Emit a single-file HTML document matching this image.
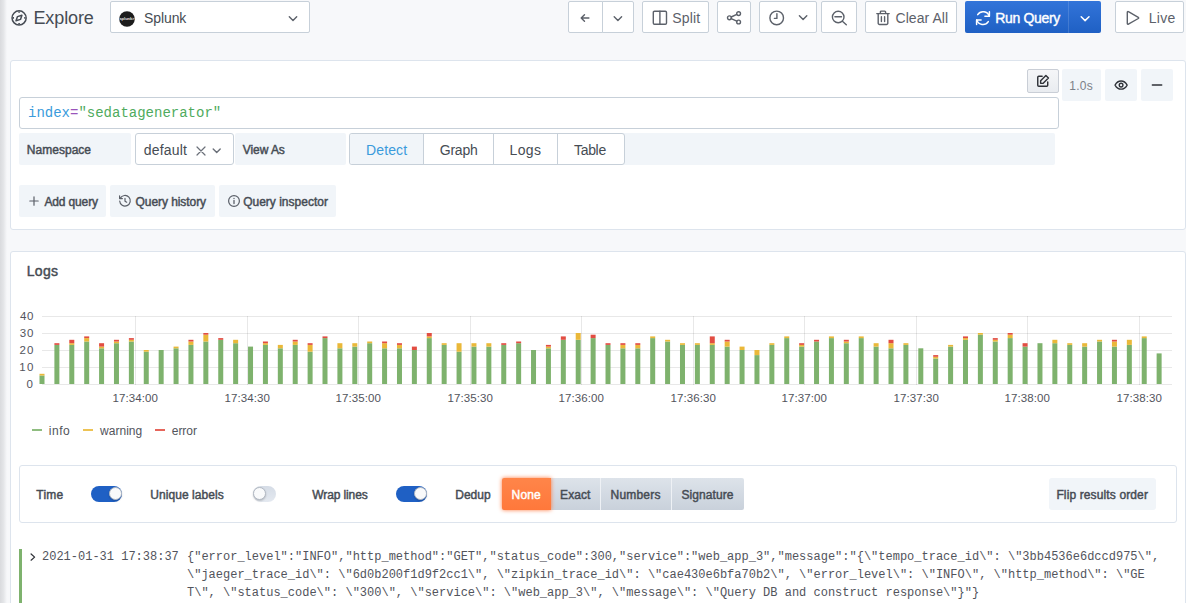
<!DOCTYPE html>
<html lang="en">
<head>
<meta charset="utf-8">
<title>Explore - Grafana</title>
<style>
html,body{margin:0;padding:0;}
body{width:1186px;height:603px;overflow:hidden;background:#f7f8fa;position:relative;font-family:"Liberation Sans",sans-serif;}
.abs{position:absolute;display:block;}
.tx{position:absolute;white-space:pre;display:block;}
.box{position:absolute;box-sizing:border-box;}
.tb{background:#fff;border:1px solid #c7d0d9;border-radius:2px;}
.sec{background:#f1f5f9;border-radius:2px;}
.panel{background:#fff;border:1px solid #dde4ed;border-radius:3px;}
svg{overflow:visible}
.ic{fill:none;stroke:#5c616a;stroke-width:1.4;stroke-linecap:round;stroke-linejoin:round}
</style>
</head>
<body>
<!-- left sidebar shadow -->
<div class="box" style="left:0;top:0;width:7px;height:603px;background:linear-gradient(90deg,rgba(60,64,72,.16),rgba(60,64,72,.10) 50%,rgba(60,64,72,0))"></div>

<!-- ===== top toolbar ===== -->
<svg class="abs" style="left:11px;top:10px" width="16" height="16" viewBox="0 0 16 16">
  <circle cx="8.1" cy="7.9" r="7.05" fill="none" stroke="#464c54" stroke-width="1.5"/>
  <path d="M10.9 5.2 L9.5 9.400 L5.0 10.8 L6.5 6.600 Z" fill="none" stroke="#464c54" stroke-width="1.500" stroke-linejoin="round"/>
  <path d="M8.1 1.5v1.200M8.1 13.100v1.200M1.8 7.900h1.200M13.200 7.900h1.200" stroke="#464c54" stroke-width="1.600"/>
</svg>

<div class="box tb" style="left:110px;top:1px;width:200px;height:32px;"></div>
<svg class="abs" style="left:119px;top:11px" width="16" height="16" viewBox="0 0 16 16">
  <circle cx="8" cy="8" r="7.800" fill="#1c1c1c"/>
  <text x="8" y="9.4" font-family="Liberation Sans, sans-serif" font-size="4" font-weight="700" fill="#e8e8e8" text-anchor="middle">splunk&gt;</text>
</svg>
<svg class="abs" style="left:288px;top:15px" width="10" height="8" viewBox="0 0 10 8"><path class="ic" d="M1.3 1.8 L5 5.5 L8.7 1.800"/></svg>

<!-- back / history -->
<div class="box tb" style="left:568px;top:1px;width:35px;height:32px;border-radius:2px 0 0 2px"></div>
<div class="box tb" style="left:602px;top:1px;width:32px;height:32px;border-radius:0 2px 2px 0"></div>
<svg class="abs" style="left:580px;top:13px" width="10" height="10" viewBox="0 0 10 10"><path class="ic" d="M8.900 5H1.300M4.500 1.700 L1.200 5 L4.500 8.300"/></svg>
<svg class="abs" style="left:613px;top:15px" width="10" height="8" viewBox="0 0 10 8"><path class="ic" d="M1.200 1.700 L4.900 5.400 L8.600 1.700"/></svg>

<!-- split -->
<div class="box tb" style="left:642px;top:1px;width:67px;height:32px;"></div>
<svg class="abs" style="left:652px;top:10px" width="16" height="16" viewBox="0 0 16 16"><rect class="ic" x="1.300" y="1.200" width="13.200" height="13.100" rx="1.200"/><path class="ic" d="M7.900 1.200v13.100"/></svg>

<!-- share -->
<div class="box tb" style="left:717px;top:1px;width:34px;height:32px;"></div>
<svg class="abs" style="left:726px;top:10px" width="16" height="16" viewBox="0 0 16 16"><circle class="ic" cx="3.400" cy="7.800" r="1.900"/><circle class="ic" cx="12.600" cy="3.600" r="1.900"/><circle class="ic" cx="12.600" cy="12" r="1.900"/><path class="ic" d="M5.200 7 L10.800 4.400M5.200 8.600 L10.800 11.200"/></svg>

<!-- time picker -->
<div class="box tb" style="left:759px;top:1px;width:58px;height:32px;"></div>
<svg class="abs" style="left:769px;top:10px" width="16" height="16" viewBox="0 0 16 16"><circle class="ic" cx="7.700" cy="7.900" r="6.800"/><path class="ic" d="M7.900 3.600V8.400H5.400"/></svg>
<svg class="abs" style="left:798px;top:14px" width="10" height="8" viewBox="0 0 10 8"><path class="ic" d="M1.400 1.800 L5.100 5.500 L8.800 1.800"/></svg>

<!-- zoom out -->
<div class="box tb" style="left:821px;top:1px;width:36px;height:32px;"></div>
<svg class="abs" style="left:831px;top:10px" width="17" height="17" viewBox="0 0 17 17"><circle class="ic" cx="7.200" cy="7" r="5.800"/><path class="ic" d="M3.900 6.700h6.600M11.400 11.200 L15.300 14.700"/></svg>

<!-- clear all -->
<div class="box tb" style="left:865px;top:1px;width:92px;height:32px;"></div>
<svg class="abs" style="left:876px;top:10px" width="14" height="16" viewBox="0 0 14 16"><path class="ic" d="M0.800 3.600h12.400M4.400 3.400V2a.9.900 0 0 1 .9-.9h3.400a.9.900 0 0 1 .9.900v1.400M2.200 3.800v9.400a1.300 1.300 0 0 0 1.300 1.300h7a1.300 1.300 0 0 0 1.300-1.300V3.800M5.400 6.800v4.800M8.600 6.800v4.800"/></svg>

<!-- run query -->
<div class="box" style="left:965px;top:1px;width:136px;height:32px;border-radius:2px;background:linear-gradient(180deg,#3274d9,#1f60c4)"></div>
<div class="box" style="left:1068px;top:1px;width:1px;height:32px;background:rgba(255,255,255,.14)"></div>
<svg class="abs" style="left:975px;top:10px" width="16" height="16" viewBox="0 0 16 16"><g fill="none" stroke="#fff" stroke-width="1.500" stroke-linecap="round" stroke-linejoin="round"><path d="M14.300 6.300A6.500 6.500 0 0 0 2.700 4.600"/><path d="M1.700 9.900a6.500 6.500 0 0 0 11.600 1.700"/><path d="M14.400 1.800v4.500H9.900"/><path d="M1.600 14.400V9.900H6.100"/></g></svg>
<svg class="abs" style="left:1080px;top:15px" width="10" height="8" viewBox="0 0 10 8"><path d="M1.200 1.800 L5.100 5.600 L9 1.800" fill="none" stroke="#fff" stroke-width="1.500" stroke-linecap="round" stroke-linejoin="round"/></svg>

<!-- live -->
<div class="box tb" style="left:1115px;top:1px;width:69px;height:32px;"></div>
<svg class="abs" style="left:1126px;top:10px" width="14" height="16" viewBox="0 0 14 16"><path class="ic" d="M1.300 2.300v11.200a.7.700 0 0 0 1.100.6l9.900-5.600a.7.700 0 0 0 0-1.200L2.400 1.700a.7.700 0 0 0-1.100.6z"/></svg>

<!-- ===== query panel ===== -->
<div class="box panel" style="left:10px;top:60px;width:1176px;height:170px;"></div>
<div class="box" style="left:19px;top:97px;width:1040px;height:32px;background:#fff;border:1px solid #c7d0d9;border-radius:3px"></div>

<!-- right tools -->
<div class="box" style="left:1027px;top:69px;width:32px;height:24px;background:linear-gradient(180deg,#f5f6f8,#e9ecf0);border:1px solid #c9ced6;border-radius:2px"></div>
<svg class="abs" style="left:1036.300px;top:74.400px" width="14" height="14" viewBox="0 0 16 16"><path class="ic" style="stroke:#2f3238;stroke-width:1.650" d="M7 2.6H3.2A1.2 1.2 0 0 0 2 3.8v9a1.2 1.2 0 0 0 1.200 1.2h9a1.2 1.2 0 0 0 1.2-1.2V9M11.300 1.800l2.900 2.900-6 6H5.300V7.800z"/></svg>
<div class="box sec" style="left:1062px;top:69px;width:39px;height:32px;"></div>
<div class="box sec" style="left:1105px;top:69px;width:32px;height:32px;"></div>
<div class="box sec" style="left:1141px;top:69px;width:32px;height:32px;"></div>
<svg class="abs" style="left:1114px;top:77.900px" width="14.200" height="14.200" viewBox="0 0 16 16"><path class="ic" style="stroke:#2f3238;stroke-width:1.550" d="M1.2 8S3.700 3.400 8 3.400 14.800 8 14.800 8 12.300 12.600 8 12.600 1.200 8 1.200 8z"/><circle class="ic" style="stroke:#2f3238;stroke-width:1.550" cx="8" cy="8" r="2.100"/></svg>
<svg class="abs" style="left:1149px;top:77px" width="16" height="16" viewBox="0 0 16 16"><path d="M3.400 8h9.300" stroke="#2f3238" stroke-width="1.500" stroke-linecap="round"/></svg>

<!-- row 2 -->
<div class="box sec" style="left:19px;top:133px;width:112px;height:32px;"></div>
<div class="box" style="left:135px;top:133px;width:99px;height:32px;background:#fff;border:1px solid #c7d0d9;border-radius:3px"></div>
<svg class="abs" style="left:196px;top:146px" width="10" height="10" viewBox="0 0 10 10"><path class="ic" style="stroke-width:1.200;stroke:#6b7079" d="M1 1 L9 9M9 1 L1 9"/></svg>
<svg class="abs" style="left:212px;top:147px" width="10" height="8" viewBox="0 0 10 8"><path class="ic" style="stroke:#6b7079" d="M1.200 1.900 L4.700 5.400 L8.200 1.900"/></svg>
<div class="box sec" style="left:235px;top:133px;width:111px;height:32px;"></div>
<div class="box sec" style="left:349px;top:133px;width:706px;height:32px;"></div>
<div class="box" style="left:349px;top:133px;width:276px;height:32px;background:#fff;border:1px solid #c7d0d9;border-radius:3px"></div>
<div class="box" style="left:350px;top:134px;width:73px;height:30px;background:#f1f5f9;border-radius:2px 0 0 2px"></div>
<div class="box" style="left:423px;top:134px;width:1px;height:30px;background:#c7d0d9"></div>
<div class="box" style="left:493px;top:134px;width:1px;height:30px;background:#c7d0d9"></div>
<div class="box" style="left:557px;top:134px;width:1px;height:30px;background:#c7d0d9"></div>

<!-- row 3 buttons -->
<div class="box sec" style="left:19px;top:185px;width:87px;height:32px;"></div>
<div class="box sec" style="left:110px;top:185px;width:105px;height:32px;"></div>
<div class="box sec" style="left:219px;top:185px;width:117px;height:32px;"></div>
<svg class="abs" style="left:29px;top:196px" width="10" height="10" viewBox="0 0 10 10"><path class="ic" style="stroke:#5a5f68;stroke-width:1.2" d="M5 .8v8.400M.8 5h8.400"/></svg>
<svg class="abs" style="left:118px;top:194px" width="14" height="14" viewBox="0 0 14 14"><path class="ic" style="stroke:#5a5f68;stroke-width:1.2" d="M2.300 4.300A5.300 5.300 0 1 1 1.700 7M1.600 1.800v2.800h2.800M7 4.400V7.200l1.700 1"/></svg>
<svg class="abs" style="left:227px;top:194px" width="14" height="14" viewBox="0 0 14 14"><circle class="ic" style="stroke:#5a5f68;stroke-width:1.2" cx="7" cy="7" r="5.400"/><path class="ic" style="stroke:#5a5f68;stroke-width:1.300" d="M7 6.400v3.200M7 4.300v.1"/></svg>

<!-- ===== logs panel ===== -->
<div class="box panel" style="left:10px;top:251px;width:1176px;height:370px;"></div>
<svg class="abs" style="left:0;top:300px" width="1186" height="110" viewBox="0 300 1186 110">
<rect x="42" y="384" width="1130" height="1" fill="rgba(0,0,0,0.09)"/>
<rect x="42" y="367" width="1130" height="1" fill="rgba(0,0,0,0.09)"/>
<rect x="42" y="350" width="1130" height="1" fill="rgba(0,0,0,0.09)"/>
<rect x="42" y="333" width="1130" height="1" fill="rgba(0,0,0,0.09)"/>
<rect x="42" y="316" width="1130" height="1" fill="rgba(0,0,0,0.09)"/>
<rect x="135" y="316" width="1" height="69" fill="rgba(0,0,0,0.09)"/>
<rect x="247" y="316" width="1" height="69" fill="rgba(0,0,0,0.09)"/>
<rect x="358" y="316" width="1" height="69" fill="rgba(0,0,0,0.09)"/>
<rect x="470" y="316" width="1" height="69" fill="rgba(0,0,0,0.09)"/>
<rect x="581" y="316" width="1" height="69" fill="rgba(0,0,0,0.09)"/>
<rect x="693" y="316" width="1" height="69" fill="rgba(0,0,0,0.09)"/>
<rect x="804" y="316" width="1" height="69" fill="rgba(0,0,0,0.09)"/>
<rect x="916" y="316" width="1" height="69" fill="rgba(0,0,0,0.09)"/>
<rect x="1027" y="316" width="1" height="69" fill="rgba(0,0,0,0.09)"/>
<rect x="1139" y="316" width="1" height="69" fill="rgba(0,0,0,0.09)"/>
<rect x="39.50" y="375.50" width="5.0" height="8.50" fill="#7eb26d"/>
<rect x="39.50" y="373.80" width="5.0" height="1.70" fill="#eab839"/>
<rect x="54.39" y="344.90" width="5.0" height="39.10" fill="#7eb26d"/>
<rect x="54.39" y="343.20" width="5.0" height="1.70" fill="#e24d42"/>
<rect x="69.29" y="344.90" width="5.0" height="39.10" fill="#7eb26d"/>
<rect x="69.29" y="343.20" width="5.0" height="1.70" fill="#eab839"/>
<rect x="69.29" y="339.80" width="5.0" height="3.40" fill="#e24d42"/>
<rect x="84.19" y="341.50" width="5.0" height="42.50" fill="#7eb26d"/>
<rect x="84.19" y="338.10" width="5.0" height="3.40" fill="#eab839"/>
<rect x="84.19" y="336.40" width="5.0" height="1.70" fill="#e24d42"/>
<rect x="99.08" y="348.30" width="5.0" height="35.70" fill="#7eb26d"/>
<rect x="99.08" y="346.60" width="5.0" height="1.70" fill="#eab839"/>
<rect x="99.08" y="343.20" width="5.0" height="3.40" fill="#e24d42"/>
<rect x="113.97" y="343.20" width="5.0" height="40.80" fill="#7eb26d"/>
<rect x="113.97" y="341.50" width="5.0" height="1.70" fill="#eab839"/>
<rect x="113.97" y="339.80" width="5.0" height="1.70" fill="#e24d42"/>
<rect x="128.87" y="341.50" width="5.0" height="42.50" fill="#7eb26d"/>
<rect x="128.87" y="339.80" width="5.0" height="1.70" fill="#eab839"/>
<rect x="128.87" y="338.10" width="5.0" height="1.70" fill="#e24d42"/>
<rect x="143.76" y="351.70" width="5.0" height="32.30" fill="#7eb26d"/>
<rect x="143.76" y="350.00" width="5.0" height="1.70" fill="#eab839"/>
<rect x="158.66" y="350.00" width="5.0" height="34.00" fill="#7eb26d"/>
<rect x="173.56" y="348.30" width="5.0" height="35.70" fill="#7eb26d"/>
<rect x="173.56" y="346.60" width="5.0" height="1.70" fill="#eab839"/>
<rect x="188.45" y="344.90" width="5.0" height="39.10" fill="#7eb26d"/>
<rect x="188.45" y="341.50" width="5.0" height="3.40" fill="#eab839"/>
<rect x="188.45" y="339.80" width="5.0" height="1.70" fill="#e24d42"/>
<rect x="203.34" y="341.50" width="5.0" height="42.50" fill="#7eb26d"/>
<rect x="203.34" y="334.70" width="5.0" height="6.80" fill="#eab839"/>
<rect x="203.34" y="333.00" width="5.0" height="1.70" fill="#e24d42"/>
<rect x="218.24" y="339.80" width="5.0" height="44.20" fill="#7eb26d"/>
<rect x="218.24" y="338.10" width="5.0" height="1.70" fill="#e24d42"/>
<rect x="233.13" y="343.20" width="5.0" height="40.80" fill="#7eb26d"/>
<rect x="233.13" y="339.80" width="5.0" height="3.40" fill="#eab839"/>
<rect x="248.03" y="346.60" width="5.0" height="37.40" fill="#7eb26d"/>
<rect x="262.92" y="344.90" width="5.0" height="39.10" fill="#7eb26d"/>
<rect x="262.92" y="343.20" width="5.0" height="1.70" fill="#eab839"/>
<rect x="262.92" y="341.50" width="5.0" height="1.70" fill="#e24d42"/>
<rect x="277.82" y="348.30" width="5.0" height="35.70" fill="#7eb26d"/>
<rect x="277.82" y="344.90" width="5.0" height="3.40" fill="#eab839"/>
<rect x="292.72" y="344.90" width="5.0" height="39.10" fill="#7eb26d"/>
<rect x="292.72" y="341.50" width="5.0" height="3.40" fill="#eab839"/>
<rect x="292.72" y="339.80" width="5.0" height="1.70" fill="#e24d42"/>
<rect x="307.61" y="351.70" width="5.0" height="32.30" fill="#7eb26d"/>
<rect x="307.61" y="344.90" width="5.0" height="6.80" fill="#eab839"/>
<rect x="307.61" y="343.20" width="5.0" height="1.70" fill="#e24d42"/>
<rect x="322.50" y="338.10" width="5.0" height="45.90" fill="#7eb26d"/>
<rect x="322.50" y="336.40" width="5.0" height="1.70" fill="#e24d42"/>
<rect x="337.40" y="348.30" width="5.0" height="35.70" fill="#7eb26d"/>
<rect x="337.40" y="343.20" width="5.0" height="5.10" fill="#eab839"/>
<rect x="352.30" y="346.60" width="5.0" height="37.40" fill="#7eb26d"/>
<rect x="352.30" y="343.20" width="5.0" height="3.40" fill="#eab839"/>
<rect x="367.19" y="343.20" width="5.0" height="40.80" fill="#7eb26d"/>
<rect x="367.19" y="341.50" width="5.0" height="1.70" fill="#eab839"/>
<rect x="382.08" y="348.30" width="5.0" height="35.70" fill="#7eb26d"/>
<rect x="382.08" y="343.20" width="5.0" height="5.10" fill="#eab839"/>
<rect x="382.08" y="341.50" width="5.0" height="1.70" fill="#e24d42"/>
<rect x="396.98" y="348.30" width="5.0" height="35.70" fill="#7eb26d"/>
<rect x="396.98" y="344.90" width="5.0" height="3.40" fill="#eab839"/>
<rect x="396.98" y="343.20" width="5.0" height="1.70" fill="#e24d42"/>
<rect x="411.88" y="350.00" width="5.0" height="34.00" fill="#7eb26d"/>
<rect x="411.88" y="346.60" width="5.0" height="3.40" fill="#e24d42"/>
<rect x="426.77" y="338.10" width="5.0" height="45.90" fill="#7eb26d"/>
<rect x="426.77" y="336.40" width="5.0" height="1.70" fill="#eab839"/>
<rect x="426.77" y="333.00" width="5.0" height="3.40" fill="#e24d42"/>
<rect x="441.66" y="344.90" width="5.0" height="39.10" fill="#7eb26d"/>
<rect x="441.66" y="343.20" width="5.0" height="1.70" fill="#eab839"/>
<rect x="456.56" y="351.70" width="5.0" height="32.30" fill="#7eb26d"/>
<rect x="456.56" y="343.20" width="5.0" height="8.50" fill="#eab839"/>
<rect x="471.45" y="346.60" width="5.0" height="37.40" fill="#7eb26d"/>
<rect x="471.45" y="343.20" width="5.0" height="3.40" fill="#eab839"/>
<rect x="486.35" y="346.60" width="5.0" height="37.40" fill="#7eb26d"/>
<rect x="486.35" y="343.20" width="5.0" height="3.40" fill="#eab839"/>
<rect x="501.25" y="344.90" width="5.0" height="39.10" fill="#7eb26d"/>
<rect x="501.25" y="343.20" width="5.0" height="1.70" fill="#e24d42"/>
<rect x="516.14" y="343.20" width="5.0" height="40.80" fill="#7eb26d"/>
<rect x="516.14" y="341.50" width="5.0" height="1.70" fill="#e24d42"/>
<rect x="531.03" y="350.00" width="5.0" height="34.00" fill="#7eb26d"/>
<rect x="545.93" y="348.30" width="5.0" height="35.70" fill="#7eb26d"/>
<rect x="545.93" y="346.60" width="5.0" height="1.70" fill="#eab839"/>
<rect x="545.93" y="344.90" width="5.0" height="1.70" fill="#e24d42"/>
<rect x="560.82" y="339.80" width="5.0" height="44.20" fill="#7eb26d"/>
<rect x="560.82" y="336.40" width="5.0" height="3.40" fill="#e24d42"/>
<rect x="575.72" y="339.80" width="5.0" height="44.20" fill="#7eb26d"/>
<rect x="575.72" y="333.00" width="5.0" height="6.80" fill="#eab839"/>
<rect x="590.62" y="338.10" width="5.0" height="45.90" fill="#7eb26d"/>
<rect x="590.62" y="334.70" width="5.0" height="3.40" fill="#e24d42"/>
<rect x="605.51" y="344.90" width="5.0" height="39.10" fill="#7eb26d"/>
<rect x="605.51" y="343.20" width="5.0" height="1.70" fill="#e24d42"/>
<rect x="620.40" y="348.30" width="5.0" height="35.70" fill="#7eb26d"/>
<rect x="620.40" y="344.90" width="5.0" height="3.40" fill="#eab839"/>
<rect x="620.40" y="343.20" width="5.0" height="1.70" fill="#e24d42"/>
<rect x="635.30" y="348.30" width="5.0" height="35.70" fill="#7eb26d"/>
<rect x="635.30" y="344.90" width="5.0" height="3.40" fill="#eab839"/>
<rect x="635.30" y="343.20" width="5.0" height="1.70" fill="#e24d42"/>
<rect x="650.19" y="338.10" width="5.0" height="45.90" fill="#7eb26d"/>
<rect x="650.19" y="336.40" width="5.0" height="1.70" fill="#eab839"/>
<rect x="665.09" y="341.50" width="5.0" height="42.50" fill="#7eb26d"/>
<rect x="665.09" y="339.80" width="5.0" height="1.70" fill="#eab839"/>
<rect x="679.99" y="344.90" width="5.0" height="39.10" fill="#7eb26d"/>
<rect x="679.99" y="343.20" width="5.0" height="1.70" fill="#eab839"/>
<rect x="694.88" y="344.90" width="5.0" height="39.10" fill="#7eb26d"/>
<rect x="694.88" y="343.20" width="5.0" height="1.70" fill="#eab839"/>
<rect x="709.77" y="344.90" width="5.0" height="39.10" fill="#7eb26d"/>
<rect x="709.77" y="343.20" width="5.0" height="1.70" fill="#eab839"/>
<rect x="709.77" y="336.40" width="5.0" height="6.80" fill="#e24d42"/>
<rect x="724.67" y="346.60" width="5.0" height="37.40" fill="#7eb26d"/>
<rect x="724.67" y="341.50" width="5.0" height="5.10" fill="#eab839"/>
<rect x="724.67" y="339.80" width="5.0" height="1.70" fill="#e24d42"/>
<rect x="739.56" y="350.00" width="5.0" height="34.00" fill="#7eb26d"/>
<rect x="739.56" y="346.60" width="5.0" height="3.40" fill="#eab839"/>
<rect x="754.46" y="355.10" width="5.0" height="28.90" fill="#7eb26d"/>
<rect x="754.46" y="350.00" width="5.0" height="5.10" fill="#eab839"/>
<rect x="769.36" y="344.90" width="5.0" height="39.10" fill="#7eb26d"/>
<rect x="769.36" y="343.20" width="5.0" height="1.70" fill="#eab839"/>
<rect x="784.25" y="338.10" width="5.0" height="45.90" fill="#7eb26d"/>
<rect x="784.25" y="336.40" width="5.0" height="1.70" fill="#eab839"/>
<rect x="799.14" y="346.60" width="5.0" height="37.40" fill="#7eb26d"/>
<rect x="799.14" y="344.90" width="5.0" height="1.70" fill="#eab839"/>
<rect x="799.14" y="343.20" width="5.0" height="1.70" fill="#e24d42"/>
<rect x="814.04" y="341.50" width="5.0" height="42.50" fill="#7eb26d"/>
<rect x="814.04" y="339.80" width="5.0" height="1.70" fill="#e24d42"/>
<rect x="828.93" y="338.10" width="5.0" height="45.90" fill="#7eb26d"/>
<rect x="828.93" y="336.40" width="5.0" height="1.70" fill="#eab839"/>
<rect x="843.83" y="343.20" width="5.0" height="40.80" fill="#7eb26d"/>
<rect x="843.83" y="341.50" width="5.0" height="1.70" fill="#eab839"/>
<rect x="843.83" y="339.80" width="5.0" height="1.70" fill="#e24d42"/>
<rect x="858.73" y="338.10" width="5.0" height="45.90" fill="#7eb26d"/>
<rect x="858.73" y="336.40" width="5.0" height="1.70" fill="#eab839"/>
<rect x="873.62" y="346.60" width="5.0" height="37.40" fill="#7eb26d"/>
<rect x="873.62" y="343.20" width="5.0" height="3.40" fill="#eab839"/>
<rect x="888.51" y="348.30" width="5.0" height="35.70" fill="#7eb26d"/>
<rect x="888.51" y="343.20" width="5.0" height="5.10" fill="#eab839"/>
<rect x="888.51" y="339.80" width="5.0" height="3.40" fill="#e24d42"/>
<rect x="903.41" y="344.90" width="5.0" height="39.10" fill="#7eb26d"/>
<rect x="903.41" y="343.20" width="5.0" height="1.70" fill="#eab839"/>
<rect x="918.30" y="348.30" width="5.0" height="35.70" fill="#7eb26d"/>
<rect x="933.20" y="358.50" width="5.0" height="25.50" fill="#7eb26d"/>
<rect x="933.20" y="356.80" width="5.0" height="1.70" fill="#eab839"/>
<rect x="933.20" y="355.10" width="5.0" height="1.70" fill="#e24d42"/>
<rect x="948.10" y="346.60" width="5.0" height="37.40" fill="#7eb26d"/>
<rect x="948.10" y="344.90" width="5.0" height="1.70" fill="#eab839"/>
<rect x="962.99" y="339.80" width="5.0" height="44.20" fill="#7eb26d"/>
<rect x="962.99" y="338.10" width="5.0" height="1.70" fill="#eab839"/>
<rect x="962.99" y="336.40" width="5.0" height="1.70" fill="#e24d42"/>
<rect x="977.88" y="334.70" width="5.0" height="49.30" fill="#7eb26d"/>
<rect x="977.88" y="333.00" width="5.0" height="1.70" fill="#eab839"/>
<rect x="992.78" y="341.50" width="5.0" height="42.50" fill="#7eb26d"/>
<rect x="992.78" y="339.80" width="5.0" height="1.70" fill="#eab839"/>
<rect x="992.78" y="338.10" width="5.0" height="1.70" fill="#e24d42"/>
<rect x="1007.67" y="338.10" width="5.0" height="45.90" fill="#7eb26d"/>
<rect x="1007.67" y="334.70" width="5.0" height="3.40" fill="#eab839"/>
<rect x="1007.67" y="333.00" width="5.0" height="1.70" fill="#e24d42"/>
<rect x="1022.57" y="346.60" width="5.0" height="37.40" fill="#7eb26d"/>
<rect x="1022.57" y="343.20" width="5.0" height="3.40" fill="#e24d42"/>
<rect x="1037.46" y="343.20" width="5.0" height="40.80" fill="#7eb26d"/>
<rect x="1052.36" y="343.20" width="5.0" height="40.80" fill="#7eb26d"/>
<rect x="1052.36" y="339.80" width="5.0" height="3.40" fill="#eab839"/>
<rect x="1067.25" y="344.90" width="5.0" height="39.10" fill="#7eb26d"/>
<rect x="1067.25" y="343.20" width="5.0" height="1.70" fill="#eab839"/>
<rect x="1082.15" y="346.60" width="5.0" height="37.40" fill="#7eb26d"/>
<rect x="1082.15" y="343.20" width="5.0" height="3.40" fill="#eab839"/>
<rect x="1097.05" y="341.50" width="5.0" height="42.50" fill="#7eb26d"/>
<rect x="1097.05" y="339.80" width="5.0" height="1.70" fill="#eab839"/>
<rect x="1111.94" y="346.60" width="5.0" height="37.40" fill="#7eb26d"/>
<rect x="1111.94" y="341.50" width="5.0" height="5.10" fill="#eab839"/>
<rect x="1111.94" y="339.80" width="5.0" height="1.70" fill="#e24d42"/>
<rect x="1126.84" y="344.90" width="5.0" height="39.10" fill="#7eb26d"/>
<rect x="1126.84" y="339.80" width="5.0" height="5.10" fill="#eab839"/>
<rect x="1141.73" y="338.10" width="5.0" height="45.90" fill="#7eb26d"/>
<rect x="1141.73" y="336.40" width="5.0" height="1.70" fill="#eab839"/>
<rect x="1156.62" y="353.40" width="5.0" height="30.60" fill="#7eb26d"/>
</svg>
<!-- legend marks -->
<div class="box" style="left:32px;top:429px;width:10px;height:2px;background:#8fbd80"></div>
<div class="box" style="left:83px;top:429px;width:10px;height:2px;background:#edc354"></div>
<div class="box" style="left:155px;top:429px;width:10px;height:2px;background:#e6655b"></div>

<!-- controls -->
<div class="box" style="left:19px;top:465px;width:1158px;height:58px;background:#fff;border:1px solid #dde4ed;border-radius:3px"></div>
<!-- switches -->
<div class="box" style="left:91px;top:486px;width:30.500px;height:16px;border-radius:8px;background:#1f60c4"></div>
<div class="box" style="left:108.800px;top:487px;width:13px;height:13px;border-radius:7px;background:#f9fafb;border:1px solid #b2b9c3;box-shadow:0 1px 2px rgba(0,0,0,.2)"></div>
<div class="box" style="left:252.500px;top:486px;width:23px;height:15.500px;border-radius:8px;background:linear-gradient(180deg,#d5dce6,#e4e9f0)"></div>
<div class="box" style="left:252.800px;top:487px;width:13px;height:13px;border-radius:7px;background:#f9fafb;border:1px solid #b2b9c3;box-shadow:0 1px 2px rgba(0,0,0,.2)"></div>
<div class="box" style="left:396px;top:486px;width:30.500px;height:16px;border-radius:8px;background:#1f60c4"></div>
<div class="box" style="left:413.800px;top:487px;width:13px;height:13px;border-radius:7px;background:#f9fafb;border:1px solid #b2b9c3;box-shadow:0 1px 2px rgba(0,0,0,.2)"></div>
<!-- dedup -->
<div class="box" style="left:502px;top:478px;width:242px;height:32px;border-radius:2px;background:linear-gradient(180deg,#dde3ea,#c9d1db)"></div>
<div class="box" style="left:502px;top:478px;width:49px;height:32px;border-radius:2px 0 0 2px;background:linear-gradient(180deg,#ff8549,#ff783b);box-shadow:0 0 4px #ff7941"></div>
<div class="box" style="left:600px;top:478px;width:1px;height:32px;background:#eef1f5"></div>
<div class="box" style="left:671px;top:478px;width:1px;height:32px;background:#eef1f5"></div>
<div class="box sec" style="left:1049px;top:478px;width:107px;height:32px;border-radius:3px"></div>

<!-- log row -->
<div class="box" style="left:19px;top:549px;width:3px;height:60px;background:#7eb26d"></div>
<svg class="abs" style="left:29px;top:552px" width="8" height="10" viewBox="0 0 8 10"><path d="M2.100 2 L5.600 5.100 L2.100 8.200" fill="none" stroke="#2f3238" stroke-width="1.250" stroke-linecap="round" stroke-linejoin="round"/></svg>

<span id="t0" class="tx" style="left:33.42px;top:8.86px;font:400 18px/1 'Liberation Sans', sans-serif;color:#464c54;letter-spacing:-0.092px;">Explore</span>
<span id="t1" class="tx" style="left:144.06px;top:10.85px;font:400 14px/1 'Liberation Sans', sans-serif;color:#464c54;letter-spacing:-0.098px;">Splunk</span>
<span id="t2" class="tx" style="left:672.36px;top:10.75px;font:400 14px/1 'Liberation Sans', sans-serif;color:#5c616a;letter-spacing:0.126px;">Split</span>
<span id="t3" class="tx" style="left:895.49px;top:10.75px;font:400 14px/1 'Liberation Sans', sans-serif;color:#5c616a;letter-spacing:0.068px;">Clear All</span>
<span id="t4" class="tx" style="left:995.35px;top:10.75px;font:400 14px/1 'Liberation Sans', sans-serif;color:#ffffff;letter-spacing:-0.340px;-webkit-text-stroke:0.4px #ffffff;">Run Query</span>
<span id="t5" class="tx" style="left:1148.75px;top:10.75px;font:400 14px/1 'Liberation Sans', sans-serif;color:#5c616a;letter-spacing:0.296px;">Live</span>
<span id="t6" class="tx" style="left:28.00px;top:106.27px;font:400 14px/1 'Liberation Mono', monospace;color:#3a9bdc;">index</span>
<span id="t7" class="tx" style="left:70.00px;top:106.27px;font:400 14px/1 'Liberation Mono', monospace;color:#9954bb;">=</span>
<span id="t8" class="tx" style="left:78.40px;top:106.27px;font:400 14px/1 'Liberation Mono', monospace;color:#4fab5e;">"sedatagenerator"</span>
<span id="t9" class="tx" style="left:1069.19px;top:79.84px;font:400 12px/1 'Liberation Sans', sans-serif;color:#7b8088;letter-spacing:0.289px;">1.0s</span>
<span id="t10" class="tx" style="left:26.82px;top:144.14px;font:400 12px/1 'Liberation Sans', sans-serif;color:#464c54;letter-spacing:0.023px;-webkit-text-stroke:0.45px #464c54;">Namespace</span>
<span id="t11" class="tx" style="left:143.81px;top:143.15px;font:400 14px/1 'Liberation Sans', sans-serif;color:#464c54;letter-spacing:0.159px;">default</span>
<span id="t12" class="tx" style="left:242.75px;top:144.14px;font:400 12px/1 'Liberation Sans', sans-serif;color:#464c54;letter-spacing:-0.060px;-webkit-text-stroke:0.45px #464c54;">View As</span>
<span id="t13" class="tx" style="left:366.05px;top:143.15px;font:400 14px/1 'Liberation Sans', sans-serif;color:#3a9bdc;letter-spacing:0.118px;">Detect</span>
<span id="t14" class="tx" style="left:439.80px;top:143.15px;font:400 14px/1 'Liberation Sans', sans-serif;color:#464c54;letter-spacing:-0.249px;">Graph</span>
<span id="t15" class="tx" style="left:509.55px;top:143.15px;font:400 14px/1 'Liberation Sans', sans-serif;color:#464c54;letter-spacing:0.332px;">Logs</span>
<span id="t16" class="tx" style="left:573.99px;top:143.15px;font:400 14px/1 'Liberation Sans', sans-serif;color:#464c54;letter-spacing:-0.321px;">Table</span>
<span id="t17" class="tx" style="left:44.38px;top:195.84px;font:400 12px/1 'Liberation Sans', sans-serif;color:#464c54;letter-spacing:-0.132px;-webkit-text-stroke:0.45px #464c54;">Add query</span>
<span id="t18" class="tx" style="left:135.53px;top:195.84px;font:400 12px/1 'Liberation Sans', sans-serif;color:#464c54;letter-spacing:-0.064px;-webkit-text-stroke:0.45px #464c54;">Query history</span>
<span id="t19" class="tx" style="left:243.13px;top:195.84px;font:400 12px/1 'Liberation Sans', sans-serif;color:#464c54;letter-spacing:0.005px;-webkit-text-stroke:0.45px #464c54;">Query inspector</span>
<span id="t20" class="tx" style="left:26.65px;top:264.15px;font:400 14px/1 'Liberation Sans', sans-serif;color:#464c54;letter-spacing:0.365px;-webkit-text-stroke:0.45px #464c54;">Logs</span>
<span id="t21" class="tx" style="left:26.45px;top:378.86px;font:400 11.5px/1 'Liberation Sans', sans-serif;color:#52545c;letter-spacing:0.503px;">0</span>
<span id="t22" class="tx" style="left:19.32px;top:361.86px;font:400 11.5px/1 'Liberation Sans', sans-serif;color:#52545c;letter-spacing:1.234px;">10</span>
<span id="t23" class="tx" style="left:19.62px;top:344.86px;font:400 11.5px/1 'Liberation Sans', sans-serif;color:#52545c;letter-spacing:0.936px;">20</span>
<span id="t24" class="tx" style="left:19.76px;top:327.86px;font:400 11.5px/1 'Liberation Sans', sans-serif;color:#52545c;letter-spacing:0.796px;">30</span>
<span id="t25" class="tx" style="left:19.94px;top:310.86px;font:400 11.5px/1 'Liberation Sans', sans-serif;color:#52545c;letter-spacing:0.622px;">40</span>
<span id="t26" class="tx" style="left:112.62px;top:393.36px;font:400 11.5px/1 'Liberation Sans', sans-serif;color:#52545c;letter-spacing:0.080px;">17:34:00</span>
<span id="t27" class="tx" style="left:224.62px;top:393.36px;font:400 11.5px/1 'Liberation Sans', sans-serif;color:#52545c;letter-spacing:0.080px;">17:34:30</span>
<span id="t28" class="tx" style="left:335.62px;top:393.36px;font:400 11.5px/1 'Liberation Sans', sans-serif;color:#52545c;letter-spacing:0.080px;">17:35:00</span>
<span id="t29" class="tx" style="left:447.62px;top:393.36px;font:400 11.5px/1 'Liberation Sans', sans-serif;color:#52545c;letter-spacing:0.080px;">17:35:30</span>
<span id="t30" class="tx" style="left:558.62px;top:393.36px;font:400 11.5px/1 'Liberation Sans', sans-serif;color:#52545c;letter-spacing:0.080px;">17:36:00</span>
<span id="t31" class="tx" style="left:670.62px;top:393.36px;font:400 11.5px/1 'Liberation Sans', sans-serif;color:#52545c;letter-spacing:0.080px;">17:36:30</span>
<span id="t32" class="tx" style="left:781.62px;top:393.36px;font:400 11.5px/1 'Liberation Sans', sans-serif;color:#52545c;letter-spacing:0.080px;">17:37:00</span>
<span id="t33" class="tx" style="left:893.62px;top:393.36px;font:400 11.5px/1 'Liberation Sans', sans-serif;color:#52545c;letter-spacing:0.080px;">17:37:30</span>
<span id="t34" class="tx" style="left:1004.62px;top:393.36px;font:400 11.5px/1 'Liberation Sans', sans-serif;color:#52545c;letter-spacing:0.080px;">17:38:00</span>
<span id="t35" class="tx" style="left:1116.62px;top:393.36px;font:400 11.5px/1 'Liberation Sans', sans-serif;color:#52545c;letter-spacing:0.080px;">17:38:30</span>
<span id="t36" class="tx" style="left:48.70px;top:425.14px;font:400 12px/1 'Liberation Sans', sans-serif;color:#52545c;letter-spacing:0.553px;">info</span>
<span id="t37" class="tx" style="left:100.12px;top:425.14px;font:400 12px/1 'Liberation Sans', sans-serif;color:#52545c;letter-spacing:0.005px;">warning</span>
<span id="t38" class="tx" style="left:171.79px;top:425.14px;font:400 12px/1 'Liberation Sans', sans-serif;color:#52545c;letter-spacing:-0.057px;">error</span>
<span id="t39" class="tx" style="left:36.33px;top:488.94px;font:400 12px/1 'Liberation Sans', sans-serif;color:#464c54;letter-spacing:0.212px;-webkit-text-stroke:0.45px #464c54;">Time</span>
<span id="t40" class="tx" style="left:150.27px;top:488.94px;font:400 12px/1 'Liberation Sans', sans-serif;color:#464c54;letter-spacing:0.062px;-webkit-text-stroke:0.45px #464c54;">Unique labels</span>
<span id="t41" class="tx" style="left:312.35px;top:488.94px;font:400 12px/1 'Liberation Sans', sans-serif;color:#464c54;letter-spacing:-0.122px;-webkit-text-stroke:0.45px #464c54;">Wrap lines</span>
<span id="t42" class="tx" style="left:455.32px;top:488.94px;font:400 12px/1 'Liberation Sans', sans-serif;color:#464c54;letter-spacing:-0.018px;-webkit-text-stroke:0.45px #464c54;">Dedup</span>
<span id="t43" class="tx" style="left:511.62px;top:488.94px;font:400 12px/1 'Liberation Sans', sans-serif;color:#ffffff;letter-spacing:0.110px;-webkit-text-stroke:0.45px #ffffff;">None</span>
<span id="t44" class="tx" style="left:560.12px;top:488.94px;font:400 12px/1 'Liberation Sans', sans-serif;color:#464c54;letter-spacing:0.040px;-webkit-text-stroke:0.45px #464c54;">Exact</span>
<span id="t45" class="tx" style="left:610.52px;top:488.94px;font:400 12px/1 'Liberation Sans', sans-serif;color:#464c54;letter-spacing:0.206px;-webkit-text-stroke:0.45px #464c54;">Numbers</span>
<span id="t46" class="tx" style="left:681.56px;top:488.94px;font:400 12px/1 'Liberation Sans', sans-serif;color:#464c54;letter-spacing:0.064px;-webkit-text-stroke:0.45px #464c54;">Signature</span>
<span id="t47" class="tx" style="left:1056.42px;top:488.94px;font:400 12px/1 'Liberation Sans', sans-serif;color:#464c54;letter-spacing:0.125px;-webkit-text-stroke:0.45px #464c54;">Flip results order</span>
<span id="t48" class="tx" style="left:42.00px;top:550.81px;font:400 12px/1 'Liberation Mono', monospace;color:#52545c;">2021-01-31 17:38:37</span>
<span id="t49" class="tx" style="left:187.00px;top:550.81px;font:400 12px/1 'Liberation Mono', monospace;color:#52545c;">{"error_level":"INFO","http_method":"GET","status_code":300,"service":"web_app_3","message":"{\"tempo_trace_id\": \"3bb4536e6dccd975\",</span>
<span id="t50" class="tx" style="left:187.00px;top:568.81px;font:400 12px/1 'Liberation Mono', monospace;color:#52545c;">\"jaeger_trace_id\": \"6d0b200f1d9f2cc1\", \"zipkin_trace_id\": \"cae430e6bfa70b2\", \"error_level\": \"INFO\", \"http_method\": \"GE</span>
<span id="t51" class="tx" style="left:187.00px;top:586.81px;font:400 12px/1 'Liberation Mono', monospace;color:#52545c;">T\", \"status_code\": \"300\", \"service\": \"web_app_3\", \"message\": \"Query DB and construct response\"}"}</span>
</body>
</html>
